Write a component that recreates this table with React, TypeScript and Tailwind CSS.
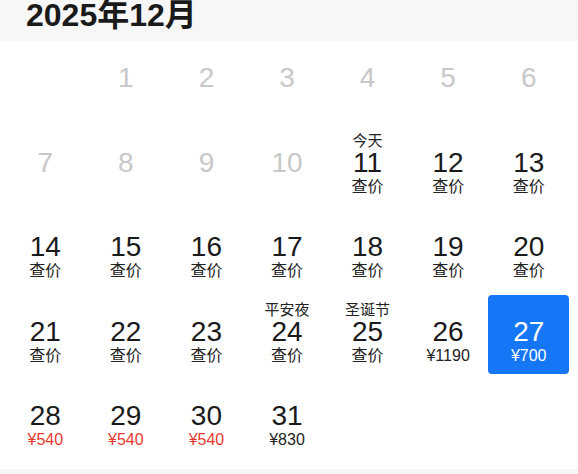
import React from 'react'

type Day = {
  day: number
  past?: boolean
  label?: string
  sub?: string
  red?: boolean
  selected?: boolean
}

const days: Day[] = [
  ...[1, 2, 3, 4, 5, 6, 7, 8, 9, 10].map((d) => ({ day: d, past: true })),
  { day: 11, label: '今天', sub: '查价' },
  ...[12, 13, 14, 15, 16, 17, 18, 19, 20, 21, 22, 23].map((d) => ({ day: d, sub: '查价' })),
  { day: 24, label: '平安夜', sub: '查价' },
  { day: 25, label: '圣诞节', sub: '查价' },
  { day: 26, sub: '¥1190' },
  { day: 27, sub: '¥700', selected: true },
  { day: 28, sub: '¥540', red: true },
  { day: 29, sub: '¥540', red: true },
  { day: 30, sub: '¥540', red: true },
  { day: 31, sub: '¥830' }
]

function DayCell({ item }: { item: Day }) {
  const numColor = item.selected
    ? 'text-white'
    : item.past
      ? 'text-[#c8c8c8]'
      : 'text-[#1a1a1a]'
  const subColor = item.selected
    ? 'text-white'
    : item.red
      ? 'text-[#e8392f]'
      : 'text-[#222222]'

  return (
    <div
      className={`flex h-[79px] flex-col items-center pt-[6px] ${
        item.selected ? 'rounded-[4px] bg-[#1677f6]' : ''
      }`}
    >
      <div className="h-[17px] text-[15px] leading-[17px] text-[#222222]">
        {item.label}
      </div>
      <div className={`h-[28px] text-[28px] leading-[28px] ${numColor}`}>
        {item.day}
      </div>
      <div className={`h-[20px] text-[16px] leading-[20px] ${subColor}`}>
        {item.sub}
      </div>
    </div>
  )
}

export default function App() {
  return (
    <div
      className="h-[474px] w-[578px] overflow-hidden bg-white"
      style={{ fontFamily: '"Liberation Sans", "Noto Sans CJK SC", sans-serif' }}
    >
      <div className="h-[41px] bg-[#f7f7f7] pl-[26px]">
        <h1 className="text-[32px] font-semibold leading-[30px] text-[#1a1a1a]">
          2025年12月
        </h1>
      </div>

      <div className="grid grid-cols-7 gap-y-[5.5px] pl-[5px] pr-[9px]">
        <div />
        {days.map((d) => (
          <DayCell key={d.day} item={d} />
        ))}
      </div>

      <div className="mt-[11px] h-[10px] bg-[#f7f7f7]" />
    </div>
  )
}
